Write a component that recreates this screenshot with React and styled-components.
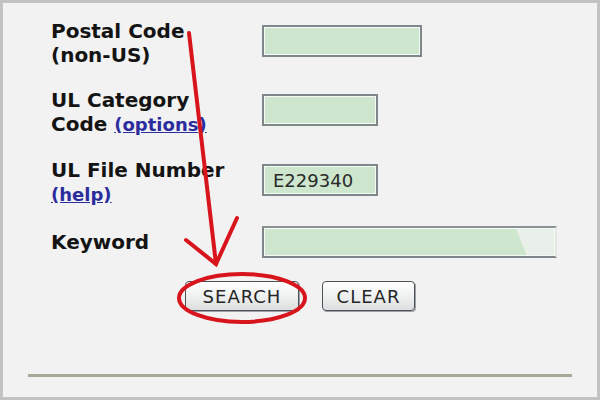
import React from 'react'
import styled, { createGlobalStyle } from 'styled-components'

const GlobalStyle = createGlobalStyle`
  html, body { margin: 0; padding: 0; }
  body { font-family: "DejaVu Sans", Verdana, sans-serif; }
`

const fields = [
  { label: 'Postal Code', sub: '(non-US)', width: 160 },
  { label: 'UL Category', sub: 'Code', link: '(options)', width: 116 },
  { label: 'UL File Number', link: '(help)', width: 116, value: 'E229340' },
  { label: 'Keyword', width: 295, wide: true },
]

export default function App() {
  return (
    <Frame>
      <GlobalStyle />
      <Form>
        {fields.map((f) => (
          <Row key={f.label} center={f.wide}>
            <Label>
              {f.label}
              {(f.sub || f.link) && <br />}
              {f.sub}
              {f.sub && f.link && ' '}
              {f.link && <Link href="#">{f.link}</Link>}
            </Label>
            <Field w={f.width} wide={f.wide} defaultValue={f.value || ''} offset={!f.wide} />
          </Row>
        ))}
        <Buttons>
          <Button w={114}>SEARCH</Button>
          <Button w={93}>CLEAR</Button>
        </Buttons>
      </Form>
      <Rule />
      <Marks width="600" height="400" viewBox="0 0 600 400">
        <g fill="none" stroke="#d8141d" strokeWidth="4" strokeLinecap="round">
          <path d="M189 33 L216 264" />
          <path d="M186 240 L216 264 L237 218" />
          <ellipse cx="242" cy="298" rx="63" ry="24" />
        </g>
      </Marks>
    </Frame>
  )
}

const Frame = styled.div`
  position: relative;
  width: 600px;
  height: 400px;
  box-sizing: border-box;
  border: 3px solid #c2c2c2;
  background: #f2f2f2;
  overflow: hidden;
  display: flex;
  flex-direction: column;
`

const Form = styled.div`
  display: flex;
  flex-direction: column;
  gap: 21px;
  padding: 16px 0 0 48px;
`

const Row = styled.div`
  display: grid;
  grid-template-columns: 211px auto;
  align-items: ${(p) => (p.center ? 'center' : 'start')};
  margin-top: ${(p) => (p.center ? '-2px' : '0')};
`

const Label = styled.div`
  font-family: "DejaVu Sans", Verdana, sans-serif;
  font-weight: bold;
  font-size: 20px;
  line-height: 24px;
  color: #141414;
`

const Link = styled.a`
  color: #2b2d9e;
  font-size: 18px;
  text-decoration: underline;
`

const Field = styled.input`
  box-sizing: border-box;
  width: ${(p) => p.w}px;
  height: 32px;
  margin-top: ${(p) => (p.offset ? '6px' : '0')};
  border: 2px solid #80878a;
  box-shadow: inset 0 0 0 1px #f4fbf4;
  background: ${(p) =>
    p.wide
      ? 'linear-gradient(68deg, #cde6cd 0%, #cde6cd 87%, #e9efe9 87%)'
      : '#cde6cd'};
  ${(p) => p.wide && 'border-right-color: #e4e8e4; border-top-color: #8c9294;'}
  padding: 0 9px;
  font-family: "DejaVu Sans", Verdana, sans-serif;
  font-size: 18px;
  color: #2a2a2a;
  outline: none;
`

const Buttons = styled.div`
  display: flex;
  gap: 23px;
  padding-left: 134px;
  margin-top: 2px;
`

const Button = styled.button`
  width: ${(p) => p.w}px;
  height: 30px;
  border: 1px solid #4d5257;
  border-radius: 4px;
  background: linear-gradient(#ffffff, #eceded 60%, #dcdede);
  box-shadow: 1px 1px 0 #9aa0a4;
  font-family: "DejaVu Sans", Verdana, sans-serif;
  font-size: 18px;
  letter-spacing: 1px;
  color: #262626;
  padding: 0;
`

const Rule = styled.div`
  margin: auto 25px 20px 25px;
  height: 3px;
  background: #a9a899;
`

const Marks = styled.svg`
  position: absolute;
  left: -3px;
  top: -3px;
  pointer-events: none;
`
